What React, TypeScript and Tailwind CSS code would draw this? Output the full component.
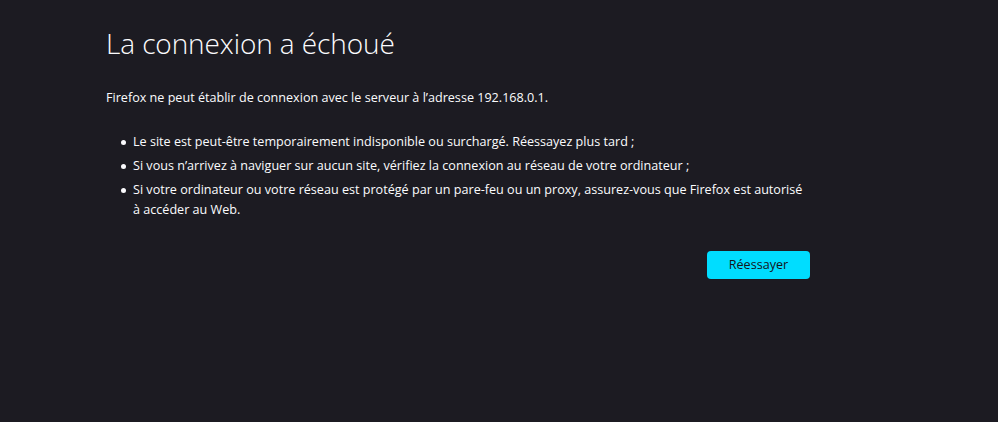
export default function App() {
  const f = { fontFamily: '"Open Sans", "Noto Sans", sans-serif' };
  const items = [
    'Le site est peut-être temporairement indisponible ou surchargé. Réessayez plus tard ;',
    'Si vous n’arrivez à naviguer sur aucun site, vérifiez la connexion au réseau de votre ordinateur ;',
    'Si votre ordinateur ou votre réseau est protégé par un pare-feu ou un proxy, assurez-vous que Firefox est autorisé à accéder au Web.',
  ];
  return (
    <div className="w-[998px] h-[422px] bg-[#1c1b22] text-[#fbfbfe] overflow-hidden" style={f}>
      <div className="ml-[106px] w-[708px] pt-[23px]">
        <h1 className="text-[28px] font-light leading-[40px] tracking-[-0.1px]">La connexion a échoué</h1>
        <p className="mt-[25px] text-[12.6px] leading-[20px]">Firefox ne peut établir de connexion avec le serveur à l’adresse 192.168.0.1.</p>
        <ul className="mt-[24px] pl-[15px] pr-[8px] text-[12.6px] leading-[20px] flex flex-col gap-[4px]">
          {items.map((t) => (
            <li key={t} className="flex items-start">
              <span className="mt-[7.5px] w-[5px] h-[5px] rounded-full bg-[#fbfbfe] shrink-0" />
              <span className="ml-[7px]">{t}</span>
            </li>
          ))}
        </ul>
        <div className="flex justify-end mt-[31px] pr-[4px]">
          <button className="w-[103px] h-[28px] rounded-[4px] bg-[#00ddff] text-[#15141a] text-[12.6px]">Réessayer</button>
        </div>
      </div>
    </div>
  );
}
